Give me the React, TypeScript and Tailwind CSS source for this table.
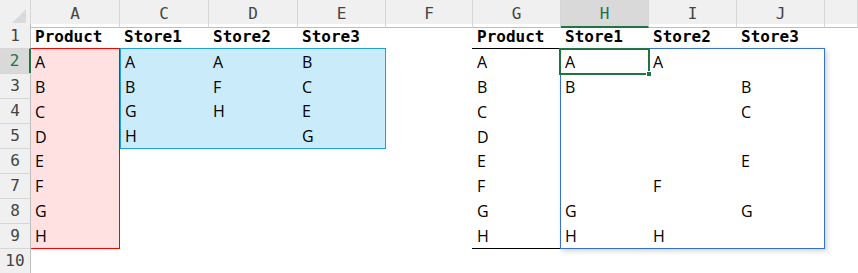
import React from "react";

const COLUMNS = ["A", "C", "D", "E", "F", "G", "H", "I", "J", ""];
const PRODUCTS = ["A", "B", "C", "D", "E", "F", "G", "H"];
const STORES = [
  ["A", "A", "B"],
  ["B", "F", "C"],
  ["G", "H", "E"],
  ["H", "", "G"],
];
const RESULT = [
  ["A", "A", ""],
  ["B", "", "B"],
  ["", "", "C"],
  ["", "", ""],
  ["", "", "E"],
  ["", "F", ""],
  ["G", "", "G"],
  ["H", "H", ""],
];

const mono = "font-['DejaVu_Sans_Mono',monospace]";
const sans = "font-['Open_Sans',sans-serif]";

function Cell({ children, className = "" }: { children?: React.ReactNode; className?: string }) {
  return (
    <div className={`flex items-center pl-1 pt-px text-[16px] leading-none text-black ${sans} ${className}`}>
      {children}
    </div>
  );
}

function HeadCell({ children, className = "" }: { children: React.ReactNode; className?: string }) {
  return (
    <div className={`row-start-1 flex items-center pl-1 pt-[2px] text-[16px] leading-none font-bold text-black ${mono} ${className}`}>
      {children}
    </div>
  );
}

export default function App() {
  return (
    <div className="flex h-[273px] w-[858px] flex-col overflow-hidden bg-white">
      {/* Column headers */}
      <div className={`grid h-[24px] grid-cols-[31px_89px_89px_89px_88px_87px_88px_88px_88px_88px_1fr] bg-[#f0f0f0] text-[16px] text-[#444] ${mono}`}>
        <div className="flex items-end justify-end border-r border-b border-r-[#d6d6d6] border-b-[#bdbdbd] pr-[4px] pb-[4px]">
          <svg width="14" height="14" viewBox="0 0 14 14">
            <polygon points="14,0 14,14 0,14" fill="#dadada" />
          </svg>
        </div>
        {COLUMNS.map((c) =>
          c === "H" ? (
            <div
              key={c}
              className="flex items-center justify-center border-r border-b-2 border-r-[#d6d6d6] border-b-[#217346] bg-[#d9d9d9] pt-[2px] text-[#217346]"
            >
              {c}
            </div>
          ) : (
            <div
              key={c || "k"}
              className="flex items-center justify-center border-r border-b border-r-[#d6d6d6] border-b-[#bdbdbd]"
            >
              {c}
            </div>
          )
        )}
      </div>

      <div className="flex flex-1">
        {/* Row headers */}
        <div className={`flex w-[31px] flex-col bg-[#f0f0f0] text-[16px] text-[#444] ${mono}`}>
          {Array.from({ length: 10 }, (_, i) => i + 1).map((n) =>
            n === 2 ? (
              <div
                key={n}
                className="flex h-[25px] items-center justify-center border-t border-r-2 border-t-[#d6d6d6] border-r-[#217346] bg-[#d9d9d9] text-[#217346]"
              >
                {n}
              </div>
            ) : (
              <div
                key={n}
                className={`flex items-center justify-center border-r border-r-[#bfbfbf] ${
                  n === 1 ? "h-[24px]" : "h-[25px] border-t border-t-[#d6d6d6]"
                }`}
              >
                {n}
              </div>
            )
          )}
        </div>

        {/* Sheet */}
        <div className="grid flex-1 grid-cols-[89px_89px_89px_88px_87px_88px_88px_88px_88px_1fr] grid-rows-[24px_repeat(9,25px)]">
          <HeadCell className="col-start-1">Product</HeadCell>
          <HeadCell className="col-start-2">Store1</HeadCell>
          <HeadCell className="col-start-3">Store2</HeadCell>
          <HeadCell className="col-start-4">Store3</HeadCell>
          <HeadCell className="col-start-6">Product</HeadCell>
          <HeadCell className="col-start-7">Store1</HeadCell>
          <HeadCell className="col-start-8">Store2</HeadCell>
          <HeadCell className="col-start-9">Store3</HeadCell>

          {/* A2:A9 */}
          <div className="col-start-1 row-span-8 row-start-2 -mb-px flex flex-col border-t border-r border-b border-[#ff0000] bg-[#ffe1e1]">
            {PRODUCTS.map((p) => (
              <Cell key={p} className="flex-1">
                {p}
              </Cell>
            ))}
          </div>

          {/* C2:E5 */}
          <div className="col-span-3 col-start-2 row-span-4 row-start-2 -mb-px grid grid-cols-[88px_89px_1fr] grid-rows-4 border border-[#1ea0dc] bg-[#c9ebfa]">
            {STORES.flat().map((v, i) => (
              <Cell key={i}>{v}</Cell>
            ))}
          </div>

          {/* G2:G9 */}
          <div className="col-start-6 row-span-8 row-start-2 -mb-px -ml-px flex flex-col border-t border-b border-black">
            {PRODUCTS.map((p) => (
              <Cell key={p} className="flex-1 pl-[5px]">
                {p}
              </Cell>
            ))}
          </div>

          {/* H2:J9 */}
          <div className="col-span-3 col-start-7 row-span-8 row-start-2 -mb-px -ml-px grid grid-cols-[88px_88px_1fr] grid-rows-8 border border-[#3570d4] bg-white shadow-[2px_2px_5px_rgba(0,0,0,0.18)]">
            {RESULT.flat().map((v, i) => (
              <Cell key={i} className="relative">
                {v}
                {i === 0 && (
                  <div className="absolute -top-px -left-[2px] right-[-1px] bottom-[-1px] border-2 border-[#217346]">
                    <div className="absolute right-[-4px] bottom-[-4px] h-[6px] w-[6px] border border-white bg-[#217346]" />
                  </div>
                )}
              </Cell>
            ))}
          </div>
        </div>
      </div>
    </div>
  );
}
